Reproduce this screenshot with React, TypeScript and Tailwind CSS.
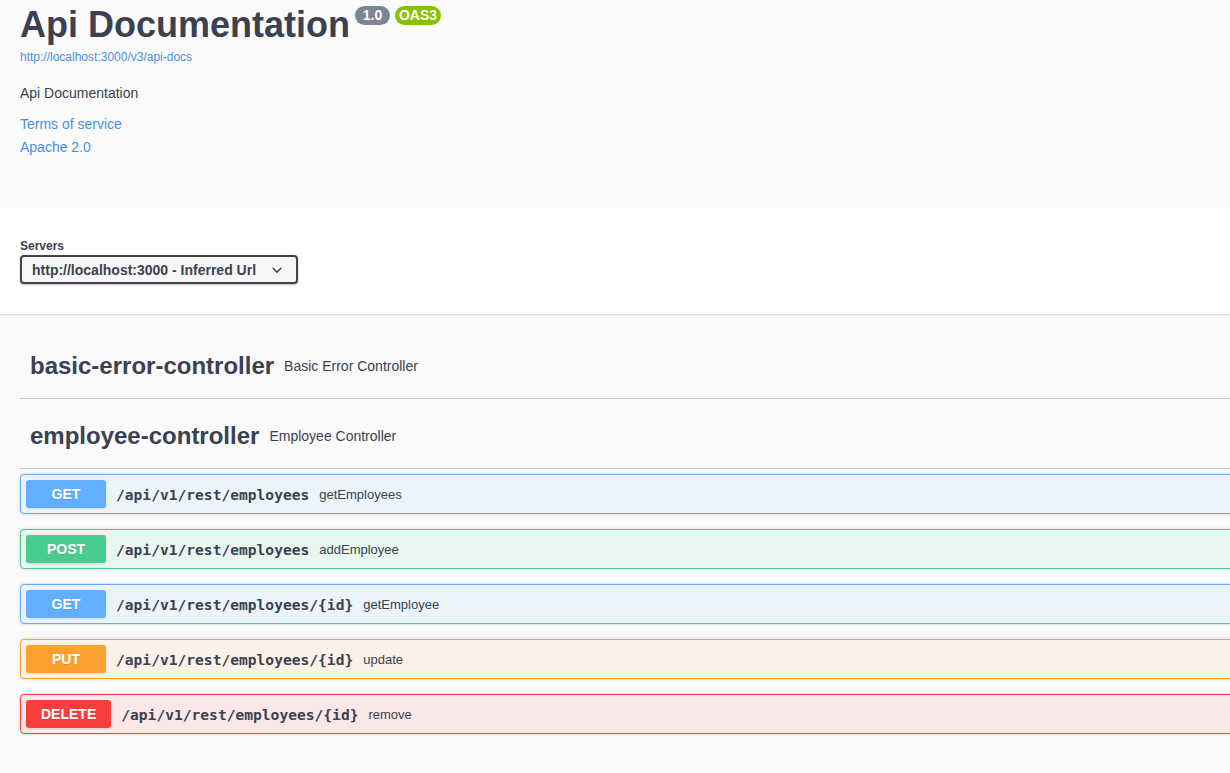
import React from "react";

type Op = { method: string; path: string; summary: string; badge: string; border: string; bg: string };

const ops: Op[] = [
  { method: "GET", path: "/api/v1/rest/employees", summary: "getEmployees", badge: "bg-[#61affe]", border: "border-[#61affe]", bg: "bg-[#ebf3fb]" },
  { method: "POST", path: "/api/v1/rest/employees", summary: "addEmployee", badge: "bg-[#49cc90]", border: "border-[#49cc90]", bg: "bg-[#e8f6f0]" },
  { method: "GET", path: "/api/v1/rest/employees/{id}", summary: "getEmployee", badge: "bg-[#61affe]", border: "border-[#61affe]", bg: "bg-[#ebf3fb]" },
  { method: "PUT", path: "/api/v1/rest/employees/{id}", summary: "update", badge: "bg-[#fca130]", border: "border-[#fca130]", bg: "bg-[#fbf1e6]" },
  { method: "DELETE", path: "/api/v1/rest/employees/{id}", summary: "remove", badge: "bg-[#f93e3e]", border: "border-[#f93e3e]", bg: "bg-[#fae7e7]" },
];

function Chevron() {
  return (
    <svg width="20" height="20" viewBox="0 0 20 20" className="shrink-0">
      <path
        fill="#3b4151"
        d="M13.418 7.859a.695.695 0 01.978 0 .68.68 0 010 .969l-3.908 3.83a.697.697 0 01-.979 0l-3.908-3.83a.68.68 0 010-.969.695.695 0 01.978 0L10 11l3.418-3.141z"
      />
    </svg>
  );
}

function TagHeading({ name, desc, mb }: { name: string; desc: string; mb: string }) {
  return (
    <div className={`h-[64px] flex items-center pl-[10px] pb-[2px] border-b border-[#c4c6cb] ${mb}`}>
      <span className="text-[24px] font-bold leading-[30px]">{name}</span>
      <span className="text-[14px] pl-[10px] leading-[20px]">{desc}</span>
    </div>
  );
}

export default function App() {
  return (
    <div className="w-full min-h-[773px] bg-[#fafafa] overflow-hidden text-[#3b4151] font-['Liberation_Sans',Arial,sans-serif]">
      <div className="w-[1460px]">
        {/* Info */}
        <div className="h-[207px] px-5">
          <div className="flex items-start">
            <h2 className="mt-[7px] h-[36px] text-[36px] leading-[36px] font-bold">Api Documentation</h2>
            <span className="ml-[5px] mt-[6px] w-[35px] h-[19px] rounded-full bg-[#7d8492] text-white text-[14px] font-bold leading-[19px] text-center">
              1.0
            </span>
            <span className="ml-[5px] mt-[6px] w-[46px] h-[19px] rounded-full bg-[#89bf04] text-white text-[14px] font-bold leading-[19px] text-center">
              OAS3
            </span>
          </div>
          <div className="mt-[6px] text-[12px] leading-[16px] text-[#4990e2]">http://localhost:3000/v3/api-docs</div>
          <div className="mt-[18px] text-[14px] leading-[20px]">Api Documentation</div>
          <div className="mt-[11px] text-[14px] leading-[20px] text-[#4990e2]">Terms of service</div>
          <div className="mt-[3px] text-[14px] leading-[20px] text-[#4990e2]">Apache 2.0</div>
        </div>

        {/* Servers */}
        <div className="h-[107px] bg-white shadow-[0_1px_2px_0_rgba(0,0,0,0.15)] px-5 pt-[31px]">
          <div className="text-[12px] font-bold leading-[16px]">Servers</div>
          <div className="mt-[1px] w-[278px] h-[29px] border-2 border-[#41444e] rounded-[4px] bg-[#f7f7f7] shadow-[0_1px_2px_0_rgba(0,0,0,0.25)] flex items-center justify-between pl-[10px] pr-[9px]">
            <span className="text-[14px] font-bold leading-[20px]">http://localhost:3000 - Inferred Url</span>
            <Chevron />
          </div>
        </div>

        {/* Tags */}
        <div className="px-5 pt-[21px]">
          <TagHeading name="basic-error-controller" desc="Basic Error Controller" mb="mb-[6px]" />
          <TagHeading name="employee-controller" desc="Employee Controller" mb="mb-[5px]" />
          <div>
            {ops.map((op, i) => (
              <div
                key={i}
                className={`h-[40px] mb-[15px] border ${op.border} ${op.bg} rounded-[4px] flex items-center p-[5px] shadow-[0_0_3px_rgba(0,0,0,0.19)]`}
              >
                <span
                  className={`${op.badge} min-w-[80px] h-[28px] px-[15px] rounded-[3px] text-white text-[14px] font-bold leading-[28px] text-center shadow-[0_1px_2px_rgba(0,0,0,0.1)] [text-shadow:0_1px_0_rgba(0,0,0,0.1)]`}
                >
                  {op.method}
                </span>
                <span className="px-[10px] pt-[2px] font-['DejaVu_Sans_Mono',monospace] font-bold text-[14.6px] leading-[20px] text-[#3b4151]">
                  {op.path}
                </span>
                <span className="pt-[2px] text-[13px] leading-[18px] text-[#3b4151]">{op.summary}</span>
              </div>
            ))}
          </div>
        </div>
      </div>
    </div>
  );
}
